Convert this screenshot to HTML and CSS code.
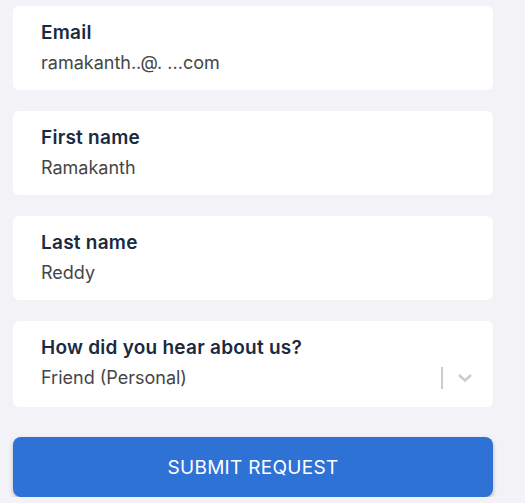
FILE: index.html
```html
<!DOCTYPE html>
<html lang="en">
<head>
  <meta charset="UTF-8">
  <title>Request form</title>
  <link rel="stylesheet" href="styles.css">
</head>
<body>

  <form class="request-form">
    <div class="field">
      <label for="email">Email</label>
      <input type="text" id="email" value="ramakanth..@. ...com">
    </div>

    <div class="field">
      <label for="first">First name</label>
      <input type="text" id="first" value="Ramakanth">
    </div>

    <div class="field">
      <label for="last">Last name</label>
      <input type="text" id="last" value="Reddy">
    </div>

    <div class="field field-select">
      <label for="source">How did you hear about us?</label>
      <div class="select-row">
        <span class="select-value" id="source">Friend (Personal)</span>
        <span class="select-sep"></span>
        <svg class="select-arrow" width="16" height="10" viewBox="0 0 16 10">
          <path d="M2 2 L8 7.5 L14 2" fill="none" stroke="#cccccc" stroke-width="2.4"/>
        </svg>
      </div>
    </div>

    <button type="submit">SUBMIT REQUEST</button>
  </form>

</body>
</html>
```

FILE: styles.css
```css
* {
  box-sizing: border-box;
}

body {
  background-color: #f3f2f7;
  font-family: Inter, 'Noto Sans', sans-serif;
  margin: 0;
  padding: 6px 32px 0 13px;
}

.request-form {
  display: flex;
  flex-direction: column;
  gap: 21px;
  width: 480px;
}

.field {
  background-color: #fff;
  border-radius: 6px;
  height: 84px;
  padding: 16px 28px 0;
}

.field-select {
  height: 86px;
}

label {
  display: block;
  font-weight: 600;
  font-size: 19px;
  line-height: 22px;
  letter-spacing: 0.25px;
  color: #1a2a3f;
}

input[type="text"],
.select-value {
  display: block;
  width: 100%;
  margin-top: 7px;
  padding: 0;
  border: none;
  outline: none;
  background: transparent;
  font-family: inherit;
  font-size: 18px;
  line-height: 24px;
  color: #464646;
}

.select-row {
  display: flex;
  align-items: center;
  margin-top: 7px;
}

.select-value {
  flex: 1;
  margin-top: 0;
}

.select-sep {
  width: 2px;
  height: 22px;
  background-color: #cccccc;
  margin: 0 14px 0 0;
}

.select-arrow {
  margin-right: -8px;
}

button {
  margin-top: 9px;
  height: 60px;
  width: 100%;
  background-color: #2f72d6;
  color: #fff;
  border: none;
  border-radius: 8px;
  font-family: inherit;
  font-size: 19px;
  font-weight: 400;
  letter-spacing: 0.3px;
  box-shadow: 0 2px 4px rgba(0, 0, 0, 0.25);
  cursor: pointer;
}
```
